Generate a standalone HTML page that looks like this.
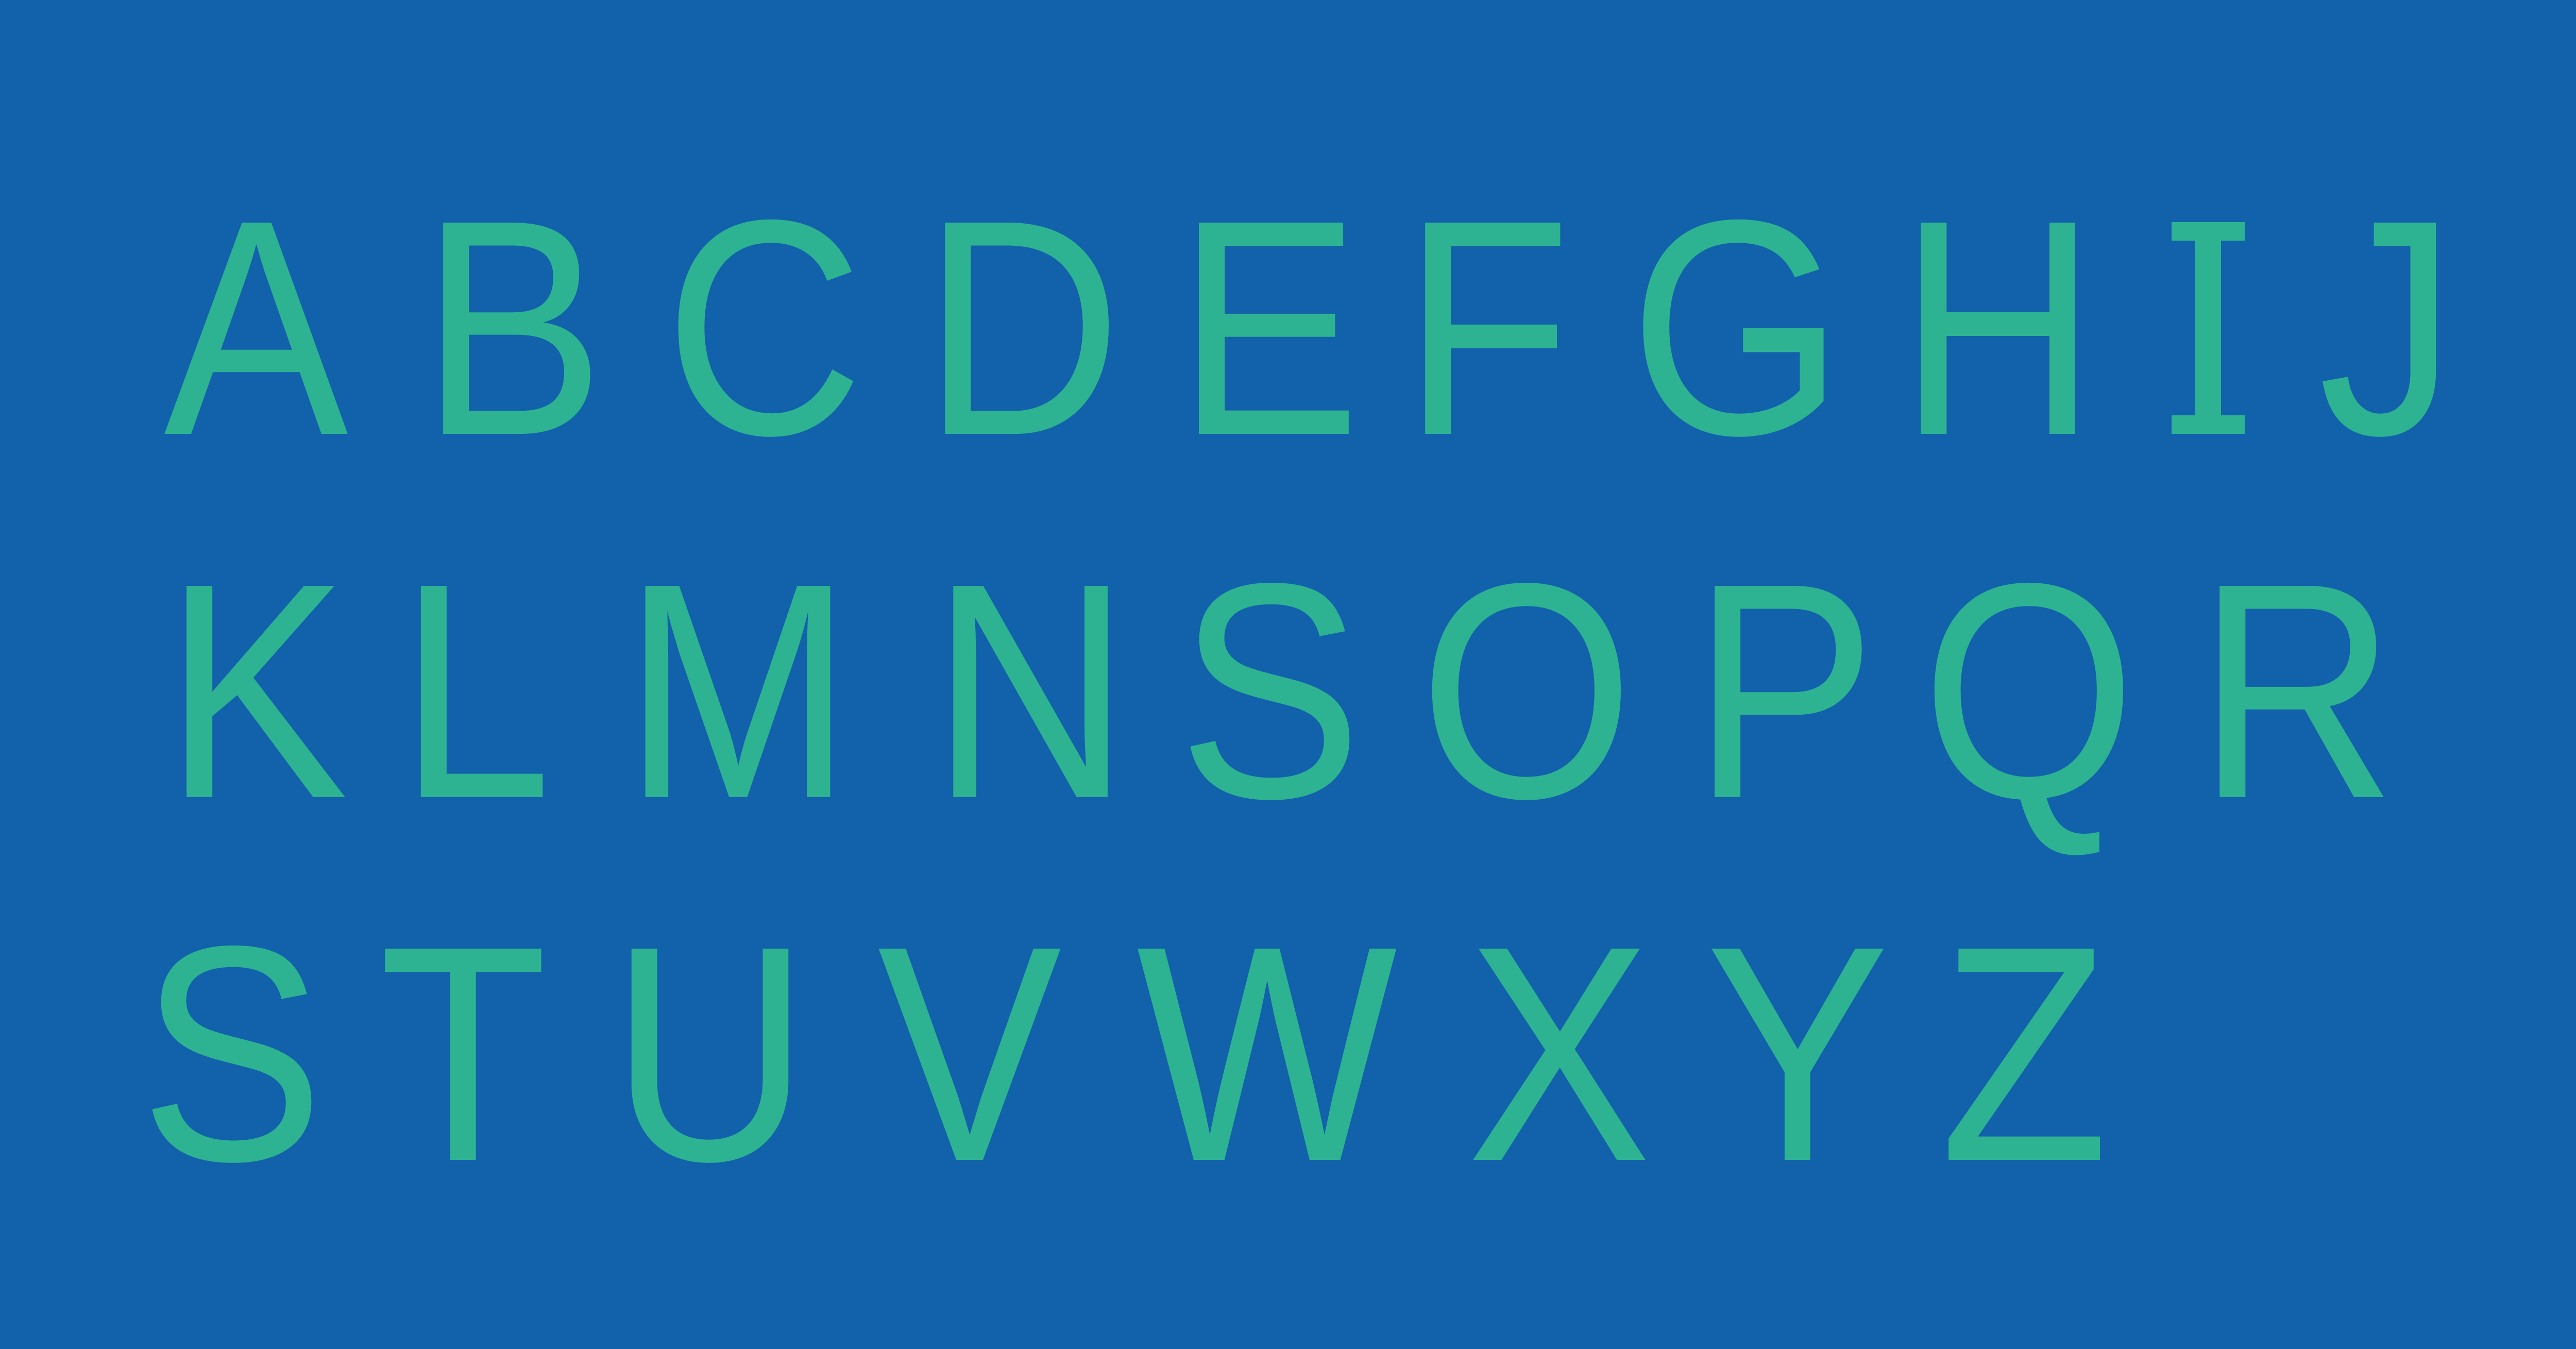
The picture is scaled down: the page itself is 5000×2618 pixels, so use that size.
<!DOCTYPE html>
<html><head><meta charset="utf-8"><style>
html,body{margin:0;padding:0}
body{width:5000px;height:2618px;background:#1261ab;position:relative;overflow:hidden;font-family:"Liberation Sans","DejaVu Sans",sans-serif;}
span{position:absolute;color:#2db391;font-size:596px;line-height:0;transform:translateX(-50%) scaleX(0.9);white-space:nowrap}
.r1{top:636px}.r2{top:1341px}.r3{top:2045px}
.bar{position:absolute;background:#2db391;width:142px;height:36px;left:4215px}
</style></head><body>
<span class="r1" style="left:497px">A</span>
<span class="r1" style="left:995px">B</span>
<span class="r1" style="left:1483px">C</span>
<span class="r1" style="left:1984px">D</span>
<span class="r1" style="left:2462px">E</span>
<span class="r1" style="left:2886px">F</span>
<span class="r1" style="left:3371px">G</span>
<span class="r1" style="left:3878px">H</span>
<span class="r1" style="left:4286px">I</span>
<div class="bar" style="top:431px"></div>
<div class="bar" style="top:806px"></div>
<span class="r1" style="left:4634px">J</span>
<span class="r2" style="left:497px">K</span>
<span class="r2" style="left:922px">L</span>
<span class="r2" style="left:1432px">M</span>
<span class="r2" style="left:2000px">N</span>
<span class="r2" style="left:2465px">S</span>
<span class="r2" style="left:2963px">O</span>
<span class="r2" style="left:3463px">P</span>
<span class="r2" style="left:3938px">Q</span>
<span class="r2" style="left:4458px">R</span>
<span class="r3" style="left:450px">S</span>
<span class="r3" style="left:899px">T</span>
<span class="r3" style="left:1378px">U</span>
<span class="r3" style="left:1882px">V</span>
<span class="r3" style="left:2459px">W</span>
<span class="r3" style="left:3026px">X</span>
<span class="r3" style="left:3489px">Y</span>
<span class="r3" style="left:3929px">Z</span>
</body></html>
